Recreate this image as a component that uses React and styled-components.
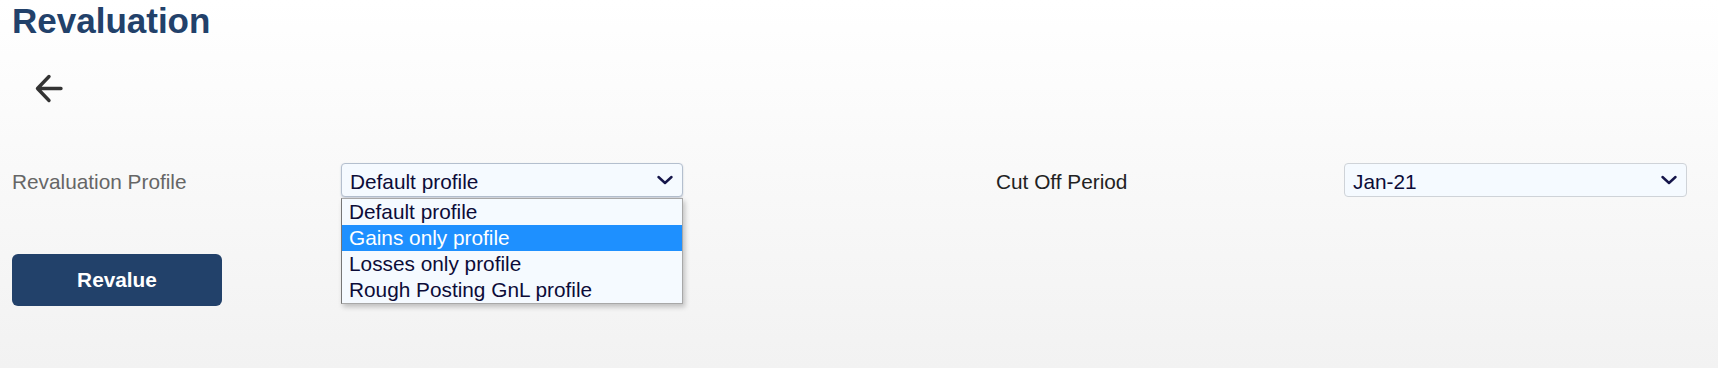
import React from 'react'
import styled, { createGlobalStyle } from 'styled-components'

const Global = createGlobalStyle`
  html, body {
    margin: 0;
    padding: 0;
  }
  body {
    font-family: "Liberation Sans", Arial, sans-serif;
  }
`

const Page = styled.div`
  box-sizing: border-box;
  width: 1718px;
  height: 368px;
  padding: 1px 31px 0 12px;
  background: linear-gradient(#ffffff, #f2f2f2);
  overflow: hidden;
`

const Title = styled.h1`
  margin: 0;
  font-size: 35px;
  line-height: 40px;
  font-weight: 700;
  color: #22416a;
`

const BackButton = styled.button`
  display: block;
  margin: 32px 0 0 22px;
  padding: 0;
  width: 30px;
  height: 30px;
  border: 0;
  background: none;
  color: #333;
  cursor: pointer;
`

const FormRow = styled.div`
  display: grid;
  grid-template-columns: 329px 342px 1fr 348px 343px;
  align-items: center;
  margin-top: 60px;
  height: 34px;
`

const Label = styled.label`
  padding-top: 3px;
  font-size: 20.8px;
  color: ${p => p.dark ? '#222' : '#666'};
`

const SelectWrap = styled.div`
  position: relative;
  grid-column: ${p => p.col};
`

const SelectBox = styled.div`
  box-sizing: border-box;
  height: 34px;
  display: flex;
  align-items: center;
  justify-content: space-between;
  padding: 0 9px 0 8px;
  border: 1px solid ${p => p.focused ? '#b4bfce' : '#cfd3d8'};
  border-radius: 4px;
  background: #f5faff;
  box-shadow: ${p => p.focused ? '0 1px 2px rgba(60, 80, 120, 0.25)' : 'none'};
  font-size: 20.8px;
  color: #0c0c38;

  span {
    padding-top: 3px;
  }
`

const List = styled.ul`
  position: absolute;
  top: calc(100% + 1px);
  left: 0;
  right: 0;
  margin: 0;
  padding: 0;
  list-style: none;
  background: #f5faff;
  border: 1px solid #a8a8a8;
  border-left-color: #767676;
  box-shadow: 2px 3px 5px rgba(0, 0, 0, 0.22);
  z-index: 2;
`

const Option = styled.li`
  height: 26px;
  line-height: 26px;
  padding-left: 7px;
  font-size: 20.8px;
  color: ${p => p.active ? '#fff' : '#0c0c38'};
  background: ${p => p.active ? '#1e90ff' : 'transparent'};
`

const Button = styled.button`
  display: block;
  margin-top: 57px;
  width: 210px;
  height: 52px;
  border: 0;
  border-radius: 6px;
  background: #22416a;
  color: #fff;
  font-family: inherit;
  font-size: 20.8px;
  font-weight: 700;
  cursor: pointer;
`

const Chevron = () => (
  <svg width="16" height="10" viewBox="0 0 16 10">
    <path d="M1.5 2 L8 8 L14.5 2" fill="none" stroke="#15154a" strokeWidth="2.4" strokeLinecap="round" strokeLinejoin="round" />
  </svg>
)

const profiles = ['Default profile', 'Gains only profile', 'Losses only profile', 'Rough Posting GnL profile']

export default function App() {
  return (
    <Page>
      <Global />
      <Title>Revaluation</Title>
      <BackButton aria-label="Back">
        <svg width="30" height="30" viewBox="0 0 30 30">
          <path d="M27 15.5H3.5 M15 3.5 L3.5 15.5 L15 27.5" fill="none" stroke="currentColor" strokeWidth="3.4" strokeLinecap="round" strokeLinejoin="round" />
        </svg>
      </BackButton>
      <FormRow>
        <Label>Revaluation Profile</Label>
        <SelectWrap col={2}>
          <SelectBox focused>
            <span>Default profile</span>
            <Chevron />
          </SelectBox>
          <List>
            {profiles.map((p, i) => (
              <Option key={p} active={i === 1}>{p}</Option>
            ))}
          </List>
        </SelectWrap>
        <Label dark style={{ gridColumn: 4 }}>Cut Off Period</Label>
        <SelectWrap col={5}>
          <SelectBox>
            <span>Jan-21</span>
            <Chevron />
          </SelectBox>
        </SelectWrap>
      </FormRow>
      <Button>Revalue</Button>
    </Page>
  )
}
